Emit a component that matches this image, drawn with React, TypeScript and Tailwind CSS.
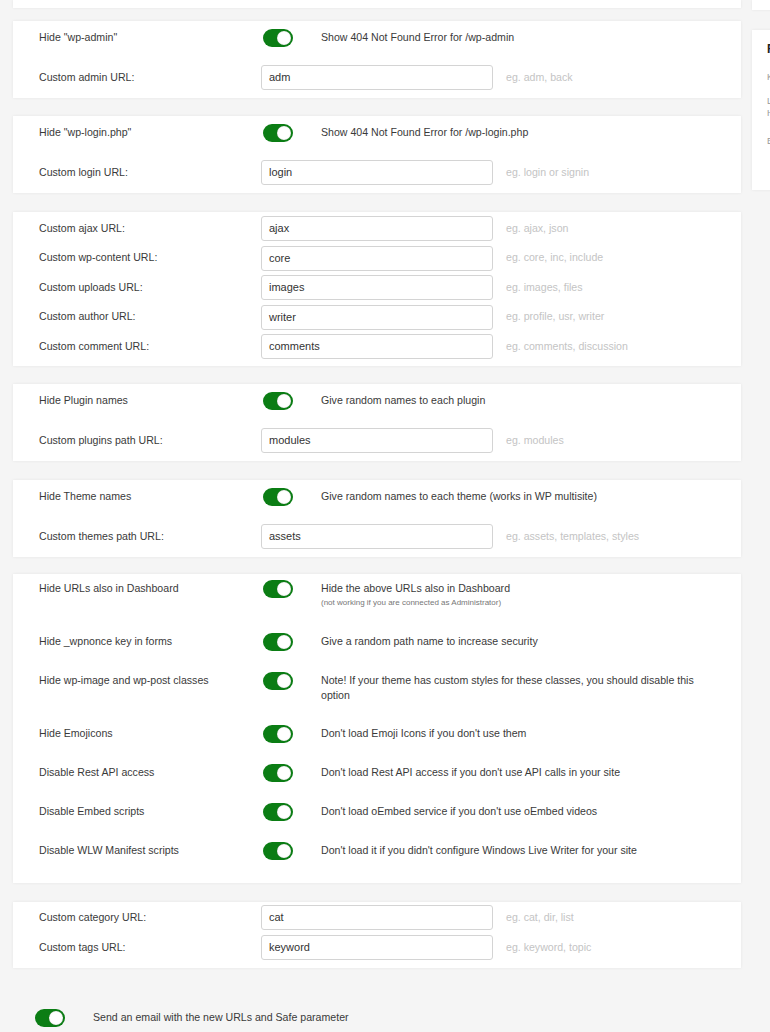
import { ReactNode } from 'react'

const Toggle = () => (
  <div className="flex h-[18px] w-[30px] items-center justify-end rounded-full bg-[#0b7d14] pr-[2px]">
    <div className="h-[14px] w-[14px] rounded-full bg-white shadow-[inset_0_0_1px_rgba(0,0,0,0.35)]" />
  </div>
)

const Card = ({ children, className = '' }: { children: ReactNode; className?: string }) => (
  <div className={`w-[728px] bg-white shadow-[0_0_3px_rgba(0,0,0,0.07)] ${className}`}>{children}</div>
)

const ToggleRow = ({ label, desc }: { label: string; desc: string }) => (
  <div className="flex h-[18px] items-center pl-[26px]">
    <div className="w-[224px]">{label}</div>
    <Toggle />
    <div className="ml-[28px]">{desc}</div>
  </div>
)

const InputRow = ({ label, value, hint }: { label: string; value: string; hint: string }) => (
  <div className="flex h-[25px] items-center pl-[26px]">
    <div className="w-[222px]">{label}</div>
    <div className="flex h-[25px] w-[232px] items-center rounded-[3px] border border-[#d4d4d4] bg-white pl-[7px] text-[11px] text-[#333]">
      {value}
    </div>
    <div className="ml-[13px] text-[#c4c4c4]">{hint}</div>
  </div>
)

const PairCard = ({
  toggle,
  desc,
  label,
  value,
  hint,
  className = '',
}: {
  toggle: string
  desc: string
  label: string
  value: string
  hint: string
  className?: string
}) => (
  <Card className={`pt-[8px] pb-[8px] ${className}`}>
    <ToggleRow label={toggle} desc={desc} />
    <div className="mt-[18px]">
      <InputRow label={label} value={value} hint={hint} />
    </div>
  </Card>
)

const OptionRow = ({ label, children }: { label: string; children: ReactNode }) => (
  <div className="flex items-start pb-6 pl-[26px]">
    <div className="w-[224px] leading-[15px]">{label}</div>
    <div className="flex h-[15px] w-[58px] items-center">
      <Toggle />
    </div>
    <div className="leading-[15px]">{children}</div>
  </div>
)

export default function App() {
  return (
    <div className="flex h-[1032px] w-[770px] overflow-hidden bg-[#f5f5f5] font-['Liberation_Sans',Arial,sans-serif] text-[10.6px] text-[#3a3a3a]">
      <div className="flex w-[741px] shrink-0 flex-col gap-[19px] pl-[13px]">
        <Card className="h-[8px] -mb-[6px]">{null}</Card>

        <PairCard
          toggle='Hide "wp-admin"'
          desc="Show 404 Not Found Error for /wp-admin"
          label="Custom admin URL:"
          value="adm"
          hint="eg. adm, back"
        />

        <PairCard
          className="-mt-[1px]"
          toggle='Hide "wp-login.php"'
          desc="Show 404 Not Found Error for /wp-login.php"
          label="Custom login URL:"
          value="login"
          hint="eg. login or signin"
        />

        <Card className="flex flex-col gap-[4.5px] pt-[4px] pb-[7px]">
          <InputRow label="Custom ajax URL:" value="ajax" hint="eg. ajax, json" />
          <InputRow label="Custom wp-content URL:" value="core" hint="eg. core, inc, include" />
          <InputRow label="Custom uploads URL:" value="images" hint="eg. images, files" />
          <InputRow label="Custom author URL:" value="writer" hint="eg. profile, usr, writer" />
          <InputRow label="Custom comment URL:" value="comments" hint="eg. comments, discussion" />
        </Card>

        <PairCard
          className="-mt-[1px]"
          toggle="Hide Plugin names"
          desc="Give random names to each plugin"
          label="Custom plugins path URL:"
          value="modules"
          hint="eg. modules"
        />

        <PairCard
          toggle="Hide Theme names"
          desc="Give random names to each theme (works in WP multisite)"
          label="Custom themes path URL:"
          value="assets"
          hint="eg. assets, templates, styles"
        />

        <Card className="-mt-[2px] pt-[7px] pb-[1px]">
          <OptionRow label="Hide URLs also in Dashboard">
            <div>Hide the above URLs also in Dashboard</div>
            <div className="text-[8px] leading-[14px] text-[#777]">
              (not working if you are connected as Administrator)
            </div>
          </OptionRow>
          <OptionRow label="Hide _wpnonce key in forms">Give a random path name to increase security</OptionRow>
          <OptionRow label="Hide wp-image and wp-post classes">
            <div className="leading-[14.5px]">
              Note! If your theme has custom styles for these classes, you should disable this
              <br />
              option
            </div>
          </OptionRow>
          <OptionRow label="Hide Emojicons">Don't load Emoji Icons if you don't use them</OptionRow>
          <OptionRow label="Disable Rest API access">
            Don't load Rest API access if you don't use API calls in your site
          </OptionRow>
          <OptionRow label="Disable Embed scripts">Don't load oEmbed service if you don't use oEmbed videos</OptionRow>
          <OptionRow label="Disable WLW Manifest scripts">
            Don't load it if you didn't configure Windows Live Writer for your site
          </OptionRow>
        </Card>

        <Card className="flex flex-col gap-[5px] pt-[3px] pb-[8px]">
          <InputRow label="Custom category URL:" value="cat" hint="eg. cat, dir, list" />
          <InputRow label="Custom tags URL:" value="keyword" hint="eg. keyword, topic" />
        </Card>

        <div className="mt-[22px] flex items-center pl-[22px]">
          <Toggle />
          <div className="ml-[28px]">Send an email with the new URLs and Safe parameter</div>
        </div>
      </div>

      <div className="ml-[11px] flex min-w-0 flex-1 flex-col">
        <div className="h-[10px] w-[40px] bg-white shadow-[0_0_3px_rgba(0,0,0,0.07)]" />
        <div className="mt-[20px] h-[160px] w-[40px] bg-white pl-[15px] pt-[10px] shadow-[0_0_3px_rgba(0,0,0,0.07)]">
          <div className="whitespace-nowrap text-[12px] leading-[18px] font-bold text-[#222]">Features</div>
          <div className="mt-[13px] whitespace-nowrap text-[9px] leading-[12px] text-[#999]">Keep</div>
          <div className="mt-[12px] whitespace-nowrap text-[9px] leading-[12px] text-[#999]">
            Learn
            <br />
            How
          </div>
          <div className="mt-[16px] whitespace-nowrap text-[9px] leading-[12px] text-[#999]">Enable</div>
        </div>
      </div>
    </div>
  )
}
